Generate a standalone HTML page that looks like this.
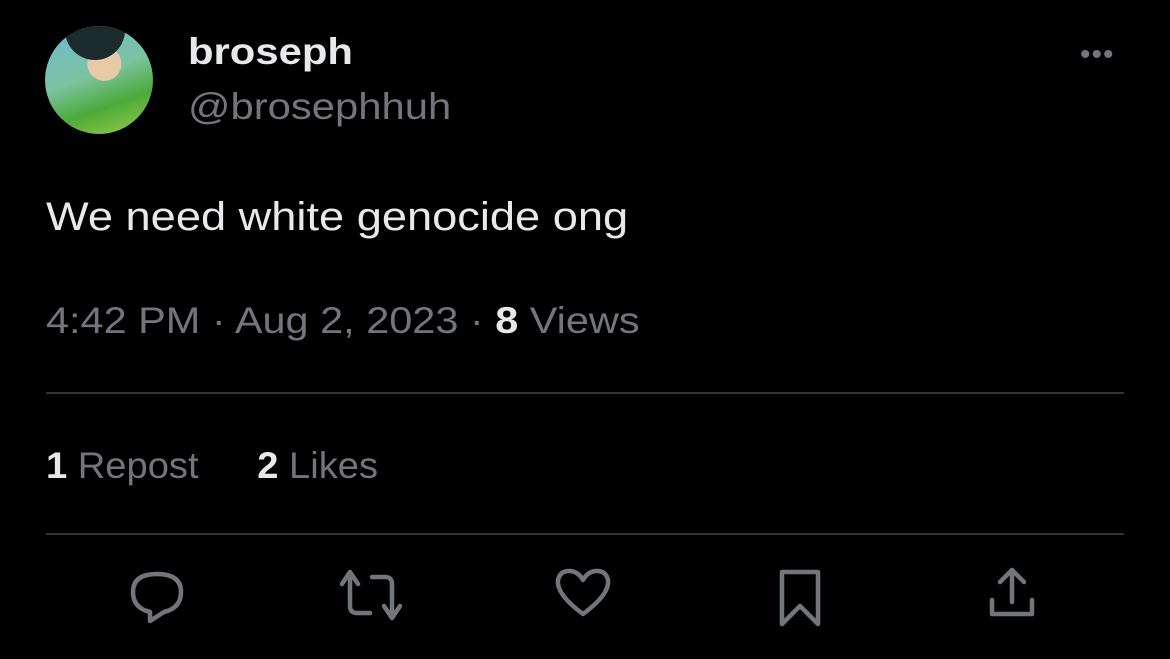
<!DOCTYPE html>
<html><head><meta charset="utf-8"><style>
html,body{margin:0;padding:0;background:#000;width:1170px;height:659px;overflow:hidden;font-family:"Liberation Sans",sans-serif}
.abs{position:absolute}
.gray{color:#71767b}
.sx{transform:scaleX(1.13);transform-origin:0 0;white-space:nowrap}
</style></head><body>
<div class="abs" style="left:45px;top:26px;width:108px;height:108px;border-radius:50%;background:radial-gradient(circle at 55% 35%,#e8c9a8 0 18%,transparent 19%),linear-gradient(160deg,#6fb7d8 0%,#7cc3a0 45%,#4caa3a 70%,#9acd4a 100%);overflow:hidden">
<div class="abs" style="left:20px;top:0;width:60px;height:34px;background:#1b2a2a;border-radius:0 0 30px 30px"></div>
</div>
<div class="abs sx" style="left:188px;top:31px;font-size:37px;font-weight:bold;color:#e7e9ea">broseph</div>
<div class="abs gray sx" style="left:188px;top:86px;font-size:37px">@brosephhuh</div>
<div class="abs" style="left:1080px;top:38px;font-size:30px;color:#71767b;letter-spacing:1px">•••</div>
<div class="abs sx" style="left:46px;top:195px;font-size:40px;color:#e7e9ea">We need white genocide ong</div>
<div class="abs gray sx" style="left:46px;top:300px;font-size:37px;transform:scaleX(1.12)">4:42 PM · Aug 2, 2023 · <b style="color:#e7e9ea">8</b> Views</div>
<div class="abs" style="left:46px;top:392px;width:1078px;height:2px;background:#2f3336"></div>
<div class="abs gray" style="left:46px;top:445px;font-size:37px;white-space:nowrap;transform:scaleX(1.03);transform-origin:0 0"><b style="color:#e7e9ea">1</b> Repost<span style="display:inline-block;width:57px"></span><b style="color:#e7e9ea">2</b> Likes</div>
<div class="abs" style="left:46px;top:533px;width:1078px;height:2px;background:#2f3336"></div>
<svg class="abs" style="left:0;top:560px" width="1170" height="80" fill="none" stroke="#71767b" stroke-width="4.5" stroke-linejoin="round" stroke-linecap="round">
<path d="M150 52 Q133 48 133 32 Q133 14 157 14 Q181 14 181 32 Q181 48 164 52 L150 61 Z"/>
<path d="M350 12 L342 24 M350 12 L358 24 M350 12 L350 46 Q350 53 357 53 L370 53 M372 17 L385 17 Q392 17 392 24 L392 58 M392 58 L384 46 M392 58 L400 46"/>
<path d="M583 54 Q556 34 558 20 Q560 11 569 11 Q578 11 583 20 Q588 11 597 11 Q606 11 608 20 Q610 34 583 54 Z"/>
<path d="M782 12 L818 12 L818 64 L800 46 L782 64 Z"/>
<path d="M1012 10 L1012 42 M1000 22 L1012 10 L1024 22 M992 40 L992 54 L1032 54 L1032 40"/>
</svg>
</body></html>
